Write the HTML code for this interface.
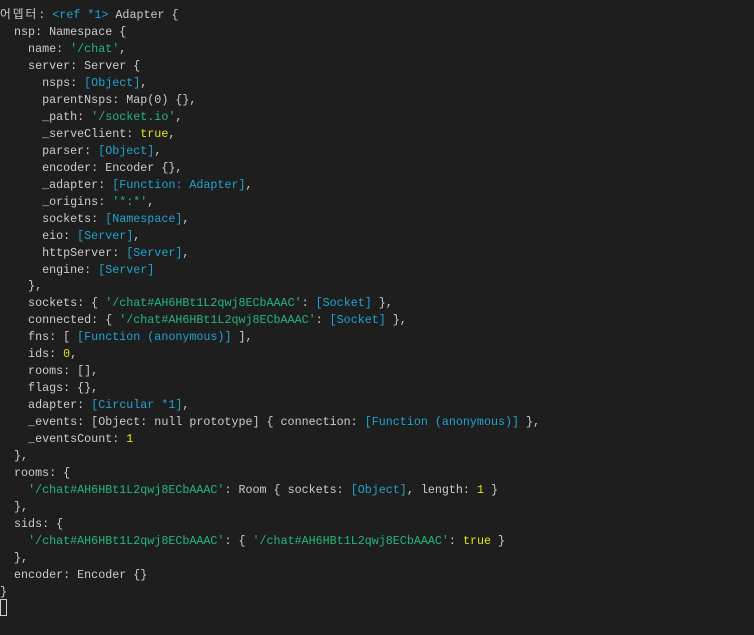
<!DOCTYPE html>
<html><head><meta charset="utf-8"><style>
html,body{margin:0;padding:0;background:#1e1e1e;width:754px;height:635px;overflow:hidden}
pre{margin:0;position:absolute;left:0;top:-11px;font-family:"Liberation Mono","Noto Sans CJK KR",monospace;font-size:11.7px;line-height:16.97px;color:#cccccc}
.g{color:#23b77a}.c{color:#1ea5cf}.y{color:#e5e510}
.k{font-family:"Noto Sans CJK KR",sans-serif;letter-spacing:2px}
#cur{position:absolute;left:0;top:599px;width:5px;height:15px;border:1px solid #cccccc}
</style></head><body>
<pre> 
<span class="k">어뎁터</span>: <span class="c">&lt;ref *1&gt;</span> Adapter {
  nsp: Namespace {
    name: <span class="g">'/chat'</span>,
    server: Server {
      nsps: <span class="c">[Object]</span>,
      parentNsps: Map(0) {},
      _path: <span class="g">'/socket.io'</span>,
      _serveClient: <span class="y">true</span>,
      parser: <span class="c">[Object]</span>,
      encoder: Encoder {},
      _adapter: <span class="c">[Function: Adapter]</span>,
      _origins: <span class="g">'*:*'</span>,
      sockets: <span class="c">[Namespace]</span>,
      eio: <span class="c">[Server]</span>,
      httpServer: <span class="c">[Server]</span>,
      engine: <span class="c">[Server]</span>
    },
    sockets: { <span class="g">'/chat#AH6HBt1L2qwj8ECbAAAC'</span>: <span class="c">[Socket]</span> },
    connected: { <span class="g">'/chat#AH6HBt1L2qwj8ECbAAAC'</span>: <span class="c">[Socket]</span> },
    fns: [ <span class="c">[Function (anonymous)]</span> ],
    ids: <span class="y">0</span>,
    rooms: [],
    flags: {},
    adapter: <span class="c">[Circular *1]</span>,
    _events: [Object: null prototype] { connection: <span class="c">[Function (anonymous)]</span> },
    _eventsCount: <span class="y">1</span>
  },
  rooms: {
    <span class="g">'/chat#AH6HBt1L2qwj8ECbAAAC'</span>: Room { sockets: <span class="c">[Object]</span>, length: <span class="y">1</span> }
  },
  sids: {
    <span class="g">'/chat#AH6HBt1L2qwj8ECbAAAC'</span>: { <span class="g">'/chat#AH6HBt1L2qwj8ECbAAAC'</span>: <span class="y">true</span> }
  },
  encoder: Encoder {}
}
</pre>
<div id="cur"></div>
</body></html>
